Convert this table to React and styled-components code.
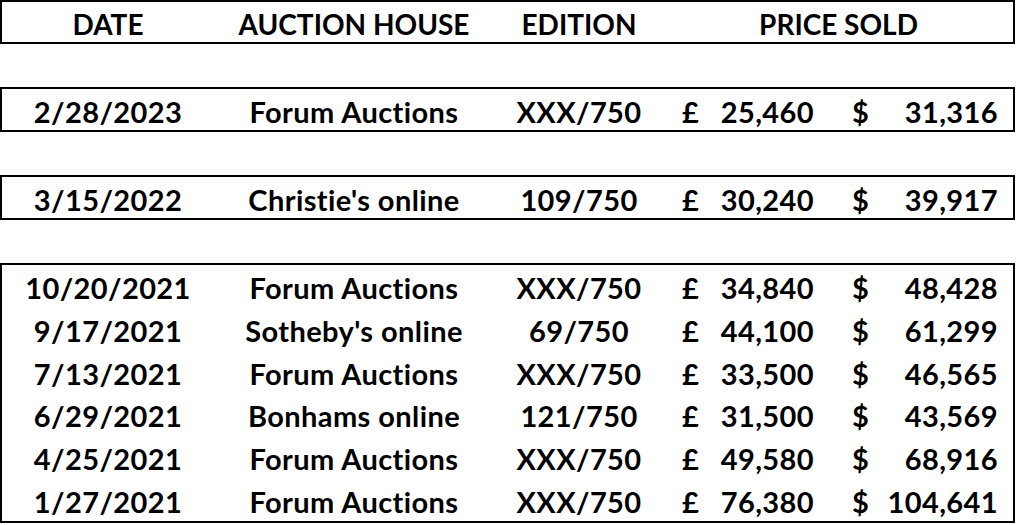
import React from "react";
import styled, { createGlobalStyle } from "styled-components";

const GlobalStyle = createGlobalStyle`
  html, body { margin: 0; padding: 0; background: #fff; }
  * { box-sizing: border-box; }
`;

const Sheet = styled.div`
  width: 1015px;
  display: flex;
  flex-direction: column;
  gap: 43px;
  font-family: Lato, "Liberation Sans", sans-serif;
  font-weight: 700;
  color: #000;
`;

const Block = styled.div`
  border: 2px solid #000;
  height: ${(p) => p.$h}px;
  display: grid;
  grid-auto-rows: 1fr;
`;

const Row = styled.div`
  display: grid;
  grid-template-columns: 212px 280px 170px 174px 1fr;
  align-items: center;
  padding-top: 3px;
  white-space: nowrap;
  font-size: ${(p) => (p.$head ? 28 : 29)}px;
  letter-spacing: ${(p) => (p.$head ? 0 : 0.4)}px;
`;

const Cell = styled.div`
  text-align: center;
`;

const SpanCell = styled(Cell)`
  grid-column: span 2;
`;

const Money = styled.div`
  display: flex;
  justify-content: space-between;
  padding-left: ${(p) => p.$pl}px;
  padding-right: ${(p) => p.$pr}px;
`;

const groups = [
  { h: 45, rows: [["2/28/2023", "Forum Auctions", "XXX/750", "25,460", "31,316"]] },
  { h: 45, rows: [["3/15/2022", "Christie's online", "109/750", "30,240", "39,917"]] },
  {
    h: 260,
    rows: [
      ["10/20/2021", "Forum Auctions", "XXX/750", "34,840", "48,428"],
      ["9/17/2021", "Sotheby's online", "69/750", "44,100", "61,299"],
      ["7/13/2021", "Forum Auctions", "XXX/750", "33,500", "46,565"],
      ["6/29/2021", "Bonhams online", "121/750", "31,500", "43,569"],
      ["4/25/2021", "Forum Auctions", "XXX/750", "49,580", "68,916"],
      ["1/27/2021", "Forum Auctions", "XXX/750", "76,380", "104,641"],
    ],
  },
];

export default function App() {
  return (
    <>
      <GlobalStyle />
      <Sheet>
        <Block $h={44}>
          <Row $head>
            <Cell>DATE</Cell>
            <Cell>AUCTION HOUSE</Cell>
            <Cell>EDITION</Cell>
            <SpanCell>PRICE SOLD</SpanCell>
          </Row>
        </Block>
        {groups.map((g, gi) => (
          <Block key={gi} $h={g.h}>
            {g.rows.map((r, ri) => (
              <Row key={ri}>
                <Cell>{r[0]}</Cell>
                <Cell>{r[1]}</Cell>
                <Cell>{r[2]}</Cell>
                <Money $pl={18} $pr={24}>
                  <span>£</span>
                  <span>{r[3]}</span>
                </Money>
                <Money $pl={14} $pr={15}>
                  <span>$</span>
                  <span>{r[4]}</span>
                </Money>
              </Row>
            ))}
          </Block>
        ))}
      </Sheet>
    </>
  );
}
